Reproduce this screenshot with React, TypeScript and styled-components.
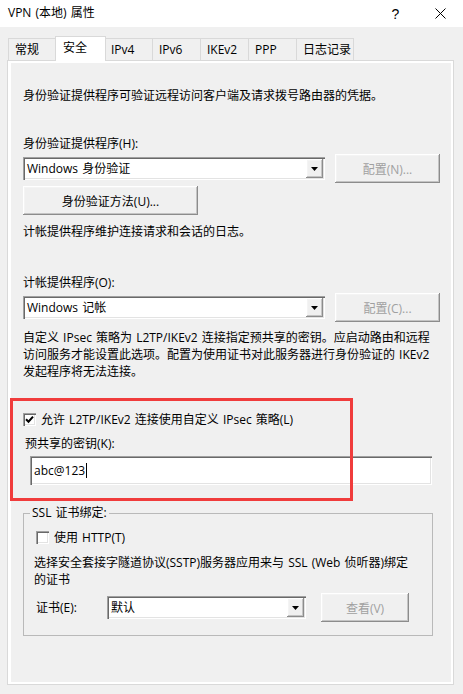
import React from "react";
import styled, { createGlobalStyle } from "styled-components";

const GlobalStyle = createGlobalStyle`
  html, body {
    margin: 0;
    padding: 0;
    background: #f0f0f0;
  }
  body {
    font-family: "Open Sans", "Noto Sans CJK SC", sans-serif;
    font-size: 12px;
    word-spacing: 1px;
    color: #000;
  }
`;

// classic 3D edges
const sunken = `
  box-shadow: inset 1px 1px #a0a0a0, inset 2px 2px #696969,
    inset -1px -1px #ffffff, inset -2px -2px #e3e3e3;
`;
const raised = `
  box-shadow: inset -1px -1px #8c8c8c, inset 1px 1px #ffffff,
    inset -2px -2px #c4c4c4, inset 2px 2px #f4f4f4;
`;

const Window = styled.div`
  position: relative;
  width: 463px;
  height: 694px;
  overflow: hidden;
  background: #f0f0f0;
`;

const TitleBar = styled.div`
  display: flex;
  align-items: center;
  height: 27px;
  background: #fff;
`;

const Title = styled.div`
  flex: 1;
  padding: 0 0 2px 8px;
  line-height: 16px;
`;

const CaptionButton = styled.div`
  display: flex;
  align-items: center;
  justify-content: center;
  width: 45px;
  height: 27px;
  font-family: "Liberation Sans", sans-serif;
  font-size: 14px;
`;

const Body = styled.div`
  padding: 9px 0 0 7px;
`;

const TabStrip = styled.div`
  position: relative;
  z-index: 1;
  display: flex;
  align-items: flex-end;
  height: 25px;
  padding-left: 1px;
  margin-bottom: -1px;
`;

const Tab = styled.div<{ $w: number; $active?: boolean; $last?: boolean }>`
  position: relative;
  z-index: ${(p) => (p.$active ? 2 : 1)};
  box-sizing: border-box;
  width: ${(p) => p.$w + (p.$active ? 4 : 0)}px;
  height: ${(p) => (p.$active ? 25 : 22)}px;
  margin: 0 ${(p) => (p.$active ? -2 : 0)}px ${(p) => (p.$active ? 0 : 1)}px;
  padding: 3px 0 0 ${(p) => (p.$active ? 7 : 6)}px;
  line-height: 16px;
  white-space: nowrap;
  background: ${(p) => (p.$active ? "#fff" : "#f0f0f0")};
  border: 1px solid #d9d9d9;
  border-bottom: none;
  border-right: ${(p) => (p.$active || p.$last ? "1px solid #d9d9d9" : "none")};
`;

const Panel = styled.div`
  box-sizing: border-box;
  width: 447px;
  height: 625px;
  padding: 2px 2px 2px 3px;
  background: #fff;
  border: 1px solid #d9d9d9;
`;

const Page = styled.div`
  box-sizing: border-box;
  height: 100%;
  padding-left: 12px;
  background: #f0f0f0;
  display: flex;
  flex-direction: column;
  align-items: flex-start;
`;

const Text = styled.div<{ $mt?: number; $ml?: number }>`
  margin-top: ${(p) => p.$mt ?? 0}px;
  margin-left: ${(p) => p.$ml ?? 0}px;
  line-height: 16px;
  white-space: nowrap;
`;

const Para = styled.div<{ $mt?: number; $ml?: number }>`
  margin-top: ${(p) => p.$mt ?? 0}px;
  margin-left: ${(p) => p.$ml ?? 0}px;
  line-height: 17px;
  white-space: nowrap;
`;

const Row = styled.div<{ $mt?: number }>`
  display: flex;
  align-items: center;
  height: 29px;
  margin-top: ${(p) => p.$mt ?? 0}px;
`;

const Combo = styled.div<{ $w: number; $gap: number }>`
  box-sizing: border-box;
  display: flex;
  align-items: center;
  width: ${(p) => p.$w}px;
  height: 23px;
  margin-right: ${(p) => p.$gap}px;
  padding: 2px 2px 2px 4px;
  background: #fff;
  ${sunken}
`;

const ComboValue = styled.div`
  flex: 1;
  line-height: 16px;
  white-space: nowrap;
`;

const ComboArrow = styled.div`
  display: flex;
  align-items: center;
  justify-content: center;
  width: 17px;
  height: 19px;
  background: #f0f0f0;
  ${raised}
`;

const Button = styled.div<{ $w: number; $disabled?: boolean; $mt?: number }>`
  box-sizing: border-box;
  display: flex;
  align-items: center;
  justify-content: center;
  width: ${(p) => p.$w}px;
  height: 29px;
  margin-top: ${(p) => p.$mt ?? 0}px;
  color: ${(p) => (p.$disabled ? "#a0a0a0" : "#000")};
  background: #f0f0f0;
  white-space: nowrap;
  ${raised}
`;

const CheckRow = styled.div<{ $mt?: number }>`
  display: flex;
  align-items: center;
  gap: 5px;
  height: 16px;
  margin-top: ${(p) => p.$mt ?? 0}px;
  white-space: nowrap;
`;

const CheckBox = styled.div`
  box-sizing: border-box;
  display: flex;
  align-items: center;
  justify-content: center;
  width: 13px;
  height: 13px;
  background: #fff;
  ${sunken}
`;

const TextBox = styled.div`
  box-sizing: border-box;
  display: flex;
  align-items: center;
  width: 402px;
  height: 29px;
  margin: 4px 0 0 7px;
  padding-left: 4px;
  background: #fff;
  ${sunken}
`;

const Caret = styled.span`
  display: inline-block;
  width: 1px;
  height: 15px;
  margin-left: 1px;
  background: #000;
`;

const GroupBox = styled.fieldset`
  box-sizing: border-box;
  width: 410px;
  margin: 20px 0 0;
  padding: 0 0 13px 12px;
  border: 1px solid #b9b9b9;
  display: flex;
  flex-direction: column;
  align-items: flex-start;
`;

const Legend = styled.legend`
  margin-left: -6px;
  padding: 0 2px;
  line-height: 16px;
`;

const FieldLabel = styled.div`
  width: 71px;
  line-height: 16px;
`;

const Annotation = styled.div`
  position: absolute;
  left: 10px;
  top: 398px;
  box-sizing: border-box;
  width: 343px;
  height: 103px;
  border: 3px solid #f03c3c;
  pointer-events: none;
`;

const Arrow = () => (
  <svg width="7" height="4" viewBox="0 0 7 4">
    <path d="M0 0h7L3.5 4z" fill="#000" />
  </svg>
);

const Check = () => (
  <svg width="9" height="9" viewBox="0 0 9 9">
    <path d="M1 4.2l2.5 2.5L8 1.6" fill="none" stroke="#000" strokeWidth="2" />
  </svg>
);

const tabs = [
  { label: "常规", w: 49 },
  { label: "安全", w: 47, active: true },
  { label: "IPv4", w: 48 },
  { label: "IPv6", w: 48 },
  { label: "IKEv2", w: 48 },
  { label: "PPP", w: 48 },
  { label: "日志记录", w: 58 },
];

export default function App() {
  return (
    <Window>
      <GlobalStyle />
      <TitleBar>
        <Title>VPN (本地) 属性</Title>
        <CaptionButton>?</CaptionButton>
        <CaptionButton>
          <svg width="11" height="11" viewBox="0 0 11 11">
            <path d="M0.5 0.5l10 10M10.5 0.5l-10 10" stroke="#000" strokeWidth="1" />
          </svg>
        </CaptionButton>
      </TitleBar>

      <Body>
        <TabStrip>
          {tabs.map((t, i) => (
            <Tab key={t.label} $w={t.w} $active={t.active} $last={i === tabs.length - 1}>
              {t.label}
            </Tab>
          ))}
        </TabStrip>

        <Panel>
          <Page>
            <Text $mt={25}>身份验证提供程序可验证远程访问客户端及请求拨号路由器的凭据。</Text>

            <Text $mt={32}>身份验证提供程序(H):</Text>
            <Row $mt={2}>
              <Combo $w={302} $gap={10}>
                <ComboValue>Windows 身份验证</ComboValue>
                <ComboArrow>
                  <Arrow />
                </ComboArrow>
              </Combo>
              <Button $w={105} $disabled>
                配置(N)...
              </Button>
            </Row>
            <Button $w={175} $mt={3}>
              身份验证方法(U)...
            </Button>

            <Text $mt={9}>计帐提供程序维护连接请求和会话的日志。</Text>

            <Text $mt={35}>计帐提供程序(O):</Text>
            <Row $mt={2}>
              <Combo $w={302} $gap={10}>
                <ComboValue>Windows 记帐</ComboValue>
                <ComboArrow>
                  <Arrow />
                </ComboArrow>
              </Combo>
              <Button $w={105} $disabled>
                配置(C)...
              </Button>
            </Row>

            <Para $mt={7}>
              自定义 IPsec 策略为 L2TP/IKEv2 连接指定预共享的密钥。应启动路由和远程
              <br />
              访问服务才能设置此选项。配置为使用证书对此服务器进行身份验证的 IKEv2
              <br />
              发起程序将无法连接。
            </Para>

            <CheckRow $mt={31}>
              <CheckBox>
                <Check />
              </CheckBox>
              允许 L2TP/IKEv2 连接使用自定义 IPsec 策略(L)
            </CheckRow>
            <Text $mt={9} $ml={2}>
              预共享的密钥(K):
            </Text>
            <TextBox>
              abc@123
              <Caret />
            </TextBox>

            <GroupBox>
              <Legend>SSL 证书绑定:</Legend>
              <CheckRow $mt={8}>
                <CheckBox />
                使用 HTTP(T)
              </CheckRow>
              <Para $mt={9} $ml={-2}>
                选择安全套接字隧道协议(SSTP)服务器应用来与 SSL (Web 侦听器)绑定
                <br />
                的证书
              </Para>
              <Row $mt={5}>
                <FieldLabel>证书(E):</FieldLabel>
                <Combo $w={199} $gap={15}>
                  <ComboValue>默认</ComboValue>
                  <ComboArrow>
                    <Arrow />
                  </ComboArrow>
                </Combo>
                <Button $w={88} $disabled>
                  查看(V)
                </Button>
              </Row>
            </GroupBox>
          </Page>
        </Panel>
      </Body>

      <Annotation />
    </Window>
  );
}
